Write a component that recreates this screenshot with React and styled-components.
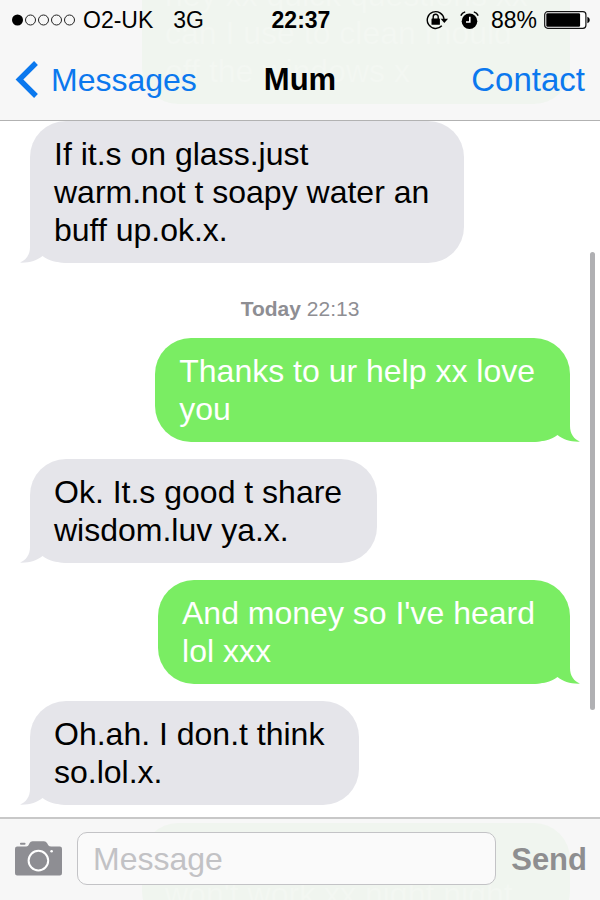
import React from "react";
import styled, { createGlobalStyle, css } from "styled-components";

const GlobalStyle = createGlobalStyle`
  *, *::before, *::after { box-sizing: border-box; }
  body {
    margin: 0;
    background: #fff;
    color: #000;
    font-family: "Liberation Sans", Arial, Helvetica, sans-serif;
  }
  button, input { font: inherit; }
`;

const Screen = styled.div`
  display: flex;
  flex-direction: column;
  height: 100vh;
  overflow: hidden;
`;

const bar = css`
  position: relative;
  flex: none;
  overflow: hidden;
  background: #f7f7f7;
`;

const Header = styled.header`
  ${bar}
  border-bottom: 1px solid #b2b2b2;
`;

const Footer = styled.form`
  ${bar}
  display: flex;
  align-items: center;
  gap: 15px;
  padding: 13px 13px 15px 15px;
  border-top: 2px solid #c8c8c8;
`;

const Ghost = styled.div`
  position: absolute;
  left: 142px;
  right: 30px;
  top: ${(p) => p.$top};
  bottom: ${(p) => p.$bottom};
  padding: 14px 23px;
  border-radius: 36px;
  background: #f0f5ef;
  color: #f3f7f2;
  font-size: 32px;
  line-height: 38px;
  white-space: nowrap;
`;

const StatusBar = styled.div`
  position: relative;
  display: grid;
  grid-template-columns: 1fr auto 1fr;
  align-items: center;
  height: 40px;
  padding: 0 10px 0 12px;
  font-size: 23px;
`;

const StatusGroup = styled.div`
  display: flex;
  align-items: center;
  justify-content: ${(p) => (p.$end ? "flex-end" : "flex-start")};
  gap: ${(p) => p.$gap};
`;

const Clock = styled.time`
  font-weight: bold;
`;

const NavBar = styled.nav`
  position: relative;
  display: grid;
  grid-template-columns: 1fr auto 1fr;
  align-items: center;
  height: 80px;
  padding: 0 15px;
`;

const Title = styled.h1`
  margin: 0;
  font-size: 31px;
  line-height: 36px;
`;

const NavLink = styled.a`
  display: flex;
  align-items: center;
  gap: 12px;
  justify-self: ${(p) => (p.$end ? "end" : "start")};
  color: #0b78ee;
  font-size: ${(p) => (p.$end ? "33px" : "32px")};
  line-height: 36px;
  text-decoration: none;
`;

const Thread = styled.main`
  position: relative;
  flex: 1;
  min-height: 0;
  display: flex;
  flex-direction: column;
  gap: 17px;
  padding: 0 30px;
  overflow: hidden;
`;

const ScrollThumb = styled.div`
  position: absolute;
  right: 5px;
  top: 131px;
  height: 458px;
  width: 5px;
  border-radius: 3px;
  background: #b0b0b3;
`;

const Stamp = styled.p`
  margin: 0;
  padding: 19px 0 2px;
  color: #8e8e93;
  font-size: 21px;
  line-height: 20px;
  text-align: center;
`;

const Bubble = styled.p`
  position: relative;
  flex: none;
  align-self: ${(p) => (p.$sent ? "flex-end" : "flex-start")};
  margin: 0;
  padding: 14px 35px 14px 24px;
  border-radius: 36px;
  background: ${(p) => (p.$sent ? "#7aed63" : "#e5e5ea")};
  color: ${(p) => (p.$sent ? "#fff" : "#000")};
  font-size: 32px;
  line-height: 38px;
  white-space: pre-line;
`;

const BubbleText = styled.span`
  position: relative;
`;

const TailSvg = styled.svg`
  position: absolute;
  bottom: 0;
  ${(p) =>
    p.$sent ? "right: -10px;" : "left: -10px; transform: scaleX(-1);"}
`;

const CameraButton = styled.button`
  position: relative;
  flex: none;
  display: flex;
  padding: 0;
  border: 0;
  background: none;
`;

const MessageInput = styled.input`
  position: relative;
  flex: 1;
  min-width: 0;
  height: 53px;
  padding: 2px 15px 0;
  border: 1px solid #c3c3c6;
  border-radius: 10px;
  background: #fafafa;
  font-size: 32px;
  outline: none;
  &::placeholder { color: #c2c2c5; opacity: 1; }
`;

const SendButton = styled.button`
  position: relative;
  flex: none;
  padding: 2px 0 0;
  border: 0;
  background: none;
  color: #8e8e90;
  font-size: 31px;
  font-weight: bold;
`;

function Tail({ sent }) {
  return (
    <TailSvg $sent={sent} width="50" height="37" viewBox="0 0 50 37" aria-hidden="true">
      <path
        d="M0 37C12 37 21 35 27.5 30C33 34.5 41 37 50 36.6C44 34 40 29 40 21V0H0Z"
        fill={sent ? "#7aed63" : "#e5e5ea"}
      />
    </TailSvg>
  );
}

function Message({ sent, children }) {
  return (
    <Bubble $sent={sent}>
      <Tail sent={sent} />
      <BubbleText>{children}</BubbleText>
    </Bubble>
  );
}

function SignalDots() {
  return (
    <svg width="64" height="14" viewBox="0 0 64 14" role="img" aria-label="Signal strength">
      <circle cx="5.5" cy="7" r="5.5" />
      {[18.5, 31.5, 44.5, 57.5].map((x) => (
        <circle key={x} cx={x} cy="7" r="5" fill="none" stroke="#222" />
      ))}
    </svg>
  );
}

function RotationLock() {
  return (
    <svg width="22" height="20" viewBox="0 0 22 20" role="img" aria-label="Rotation lock">
      <path d="M15.8 15.8A8.4 8.4 0 1 1 18 9" fill="none" stroke="#000" strokeWidth="1.4" />
      <path d="M14.6 8.8H22L18.3 13Z" />
      <rect x="5.5" y="8.5" width="8.4" height="6.3" rx=".6" />
      <path d="M7.2 9V6.7a2.5 2.5 0 0 1 5 0V9" fill="none" stroke="#000" strokeWidth="1.4" />
    </svg>
  );
}

function Alarm() {
  return (
    <svg width="19" height="19" viewBox="0 0 19 19" role="img" aria-label="Alarm set">
      <circle cx="9.5" cy="10.3" r="7.8" />
      <path d="M.8 4.6Q2 1.8 5.2.9M18.2 4.6Q17 1.8 13.8.9" fill="none" stroke="#000" strokeWidth="1.5" />
      <path d="M9.8 5.8V11H6" fill="none" stroke="#fff" strokeWidth="1.6" />
    </svg>
  );
}

function Battery() {
  return (
    <svg width="46" height="18" viewBox="0 0 46 18" role="img" aria-label="Battery">
      <rect x=".7" y=".7" width="41.2" height="16.6" rx="3" fill="#fff" stroke="#111" strokeWidth="1.2" />
      <rect x="2.3" y="2.3" width="33.8" height="13.4" rx="1.2" />
      <path d="M43.4 5.8q2.4.8 2.4 3.2t-2.4 3.2Z" />
    </svg>
  );
}

function Camera() {
  return (
    <svg width="47" height="35" viewBox="0 0 47 35" aria-hidden="true">
      <g fill="#8e8e93">
        <rect x="5" y="1.8" width="5.5" height="2" rx=".8" />
        <path d="M2.2 5.6H10.5C13.3 5.6 13.7 3.6 14.6 1.9Q15.5.2 17.5.2H29Q31 .2 32 1.9C33 3.6 33.6 5.6 36.2 5.6H44.8Q47 5.6 47 7.8V32.3Q47 34.5 44.8 34.5H2.2Q0 34.5 0 32.3V7.8Q0 5.6 2.2 5.6Z" />
      </g>
      <circle cx="23.4" cy="19.6" r="9.8" fill="none" stroke="#fff" strokeWidth="2" />
      <circle cx="36.6" cy="10.2" r="1.3" fill="#fff" />
    </svg>
  );
}

export default function App() {
  return (
    <>
      <GlobalStyle />
      <Screen>
        <Header>
          <Ghost $bottom="16px" $top="auto" aria-hidden="true">
            hey xx quick questions xx
            <br />
            can I use to clean mould
            <br />
            off the windows x
          </Ghost>
          <StatusBar>
            <StatusGroup $gap="20px">
              <StatusGroup $gap="7px">
                <SignalDots />
                <span>O2-UK</span>
              </StatusGroup>
              <span>3G</span>
            </StatusGroup>
            <Clock>22:37</Clock>
            <StatusGroup $end $gap="12px">
              <RotationLock />
              <Alarm />
              <StatusGroup $gap="7px">
                <span>88%</span>
                <Battery />
              </StatusGroup>
            </StatusGroup>
          </StatusBar>
          <NavBar>
            <NavLink href="#messages">
              <svg width="24" height="38" viewBox="0 0 24 38" aria-hidden="true">
                <path d="M21 2L4.4 18.5L21 35" fill="none" stroke="#0b78ee" strokeWidth="5.4" />
              </svg>
              Messages
            </NavLink>
            <Title>Mum</Title>
            <NavLink $end href="#contact">Contact</NavLink>
          </NavBar>
        </Header>

        <Thread>
          <Message>{"If it.s on glass.just\nwarm.not t soapy water an\nbuff up.ok.x."}</Message>
          <Stamp>
            <b>Today</b> 22:13
          </Stamp>
          <Message sent>{"Thanks to ur help xx love\nyou"}</Message>
          <Message>{"Ok. It.s good t share\nwisdom.luv ya.x."}</Message>
          <Message sent>{"And money so I've heard\nlol xxx"}</Message>
          <Message>{"Oh.ah. I don.t think\nso.lol.x."}</Message>
          <ScrollThumb />
        </Thread>

        <Footer onSubmit={(e) => e.preventDefault()}>
          <Ghost $top="4px" $bottom="auto" aria-hidden="true">
            <br />
            won't work xx night night
          </Ghost>
          <CameraButton type="button" aria-label="Attach photo">
            <Camera />
          </CameraButton>
          <MessageInput aria-label="Message" placeholder="Message" />
          <SendButton type="submit">Send</SendButton>
        </Footer>
      </Screen>
    </>
  );
}
